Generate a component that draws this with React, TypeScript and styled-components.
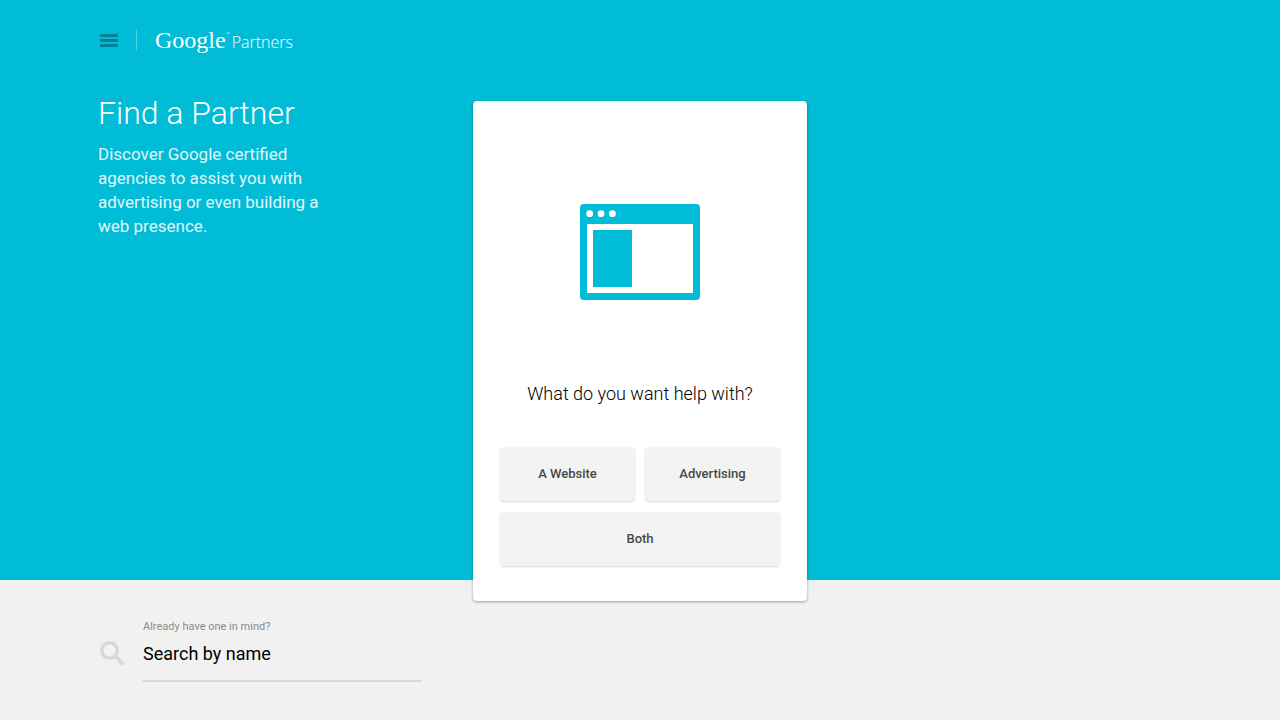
import React from "react";
import styled, { createGlobalStyle } from "styled-components";

const teal = "#00bcd7";

const GlobalStyle = createGlobalStyle`
  *, *::before, *::after { box-sizing: border-box; }
  body {
    margin: 0;
    background: #f1f1f1;
    font-family: Roboto, "Liberation Sans", sans-serif;
  }
  h1, h2, p { margin: 0; }
`;

const Hero = styled.div`
  background: ${teal};
  color: #fff;
`;

const TopBar = styled.header`
  display: flex;
  align-items: center;
  height: 80px;
  padding: 0 100px;
`;

const MenuButton = styled.button`
  display: flex;
  padding: 0;
  border: 0;
  background: none;
  color: #008294;
  cursor: pointer;
`;

const Divider = styled.span`
  width: 1px;
  height: 22px;
  margin: 0 18px;
  background: #4dd0e3;
`;

const Brand = styled.a`
  display: flex;
  align-items: baseline;
  color: #fff;
  text-decoration: none;
`;

const BrandName = styled.span`
  font: 24px/32px "Liberation Serif", serif;
`;

const TradeMark = styled.sup`
  align-self: flex-start;
  font: 4px/20px "Liberation Sans", sans-serif;
`;

const Product = styled.span`
  margin-left: 2px;
  font: 300 16px/24px "Open Sans", sans-serif;
`;

const Columns = styled.main`
  display: grid;
  grid-template-columns: minmax(0, 1fr) 334px minmax(0, 1fr);
  align-items: start;
  padding-top: 21px;
`;

const Intro = styled.section`
  padding: 0 100px 0 98px;
`;

const Title = styled.h1`
  margin-top: -10px;
  font-size: 32px;
  line-height: 44px;
  font-weight: 300;
  white-space: nowrap;
`;

const Lead = styled.p`
  max-width: 224px;
  margin-top: 7px;
  color: #e0f7fa;
  font-size: 17px;
  line-height: 24px;
`;

const Card = styled.section`
  position: relative;
  display: flex;
  flex-direction: column;
  align-items: center;
  margin-bottom: -21px;
  padding: 103px 27px 35px;
  border-radius: 4px;
  background: #fff;
  box-shadow: 0 1px 3px rgba(0, 0, 0, 0.35);
`;

const Question = styled.h2`
  margin-top: 80px;
  color: #000;
  font-size: 18px;
  line-height: 28px;
  font-weight: 300;
`;

const Choices = styled.div`
  display: grid;
  grid-template-columns: 1fr 1fr;
  gap: 11px 10px;
  width: 100%;
  margin-top: 39px;
`;

const Choice = styled.button<{ $wide?: boolean }>`
  grid-column: ${(p) => (p.$wide ? "1 / -1" : "auto")};
  height: 54px;
  padding: 0;
  border: 0;
  border-radius: 4px;
  background: #f3f3f3;
  box-shadow: 0 1px 2px rgba(0, 0, 0, 0.16);
  color: #484848;
  font: 500 13px/20px Roboto, sans-serif;
  cursor: pointer;
`;

const SearchArea = styled.form`
  display: flex;
  align-items: flex-start;
  padding: 39px 100px;
`;

const SearchIcon = styled.svg`
  flex: none;
  margin: 22px 18px 0 0;
`;

const Field = styled.div`
  display: flex;
  flex-direction: column;
  width: 278px;
`;

const FieldLabel = styled.label`
  color: #8c8c8c;
  font-size: 11px;
  line-height: 16px;
`;

const SearchInput = styled.input`
  width: 100%;
  height: 47px;
  padding: 0 0 8px;
  border: 0;
  border-bottom: 2px solid #d8d8d8;
  border-radius: 0;
  outline: 0;
  background: none;
  font: 18px/24px Roboto, sans-serif;
  color: #000;
  &::placeholder { color: #000; opacity: 1; }
`;

export default function App() {
  return (
    <>
      <GlobalStyle />
      <Hero>
        <TopBar>
          <MenuButton type="button" aria-label="Menu">
            <svg width="18" height="13" viewBox="0 0 18 13" fill="currentColor">
              <path d="M0 0h18v3H0zM0 5h18v3H0zM0 10h18v3H0z" />
            </svg>
          </MenuButton>
          <Divider />
          <Brand href="#">
            <BrandName>Google</BrandName>
            <TradeMark>™</TradeMark>
            <Product>Partners</Product>
          </Brand>
        </TopBar>
        <Columns>
          <Intro>
            <Title>Find a Partner</Title>
            <Lead>
              Discover Google certified agencies to assist you with advertising
              or even building a web presence.
            </Lead>
          </Intro>
          <Card>
            <svg width="120" height="96" viewBox="0 0 120 96" aria-hidden="true">
              <rect width="120" height="96" rx="4" fill={teal} />
              <path d="M7 20h106v69H7z" fill="#fff" />
              <path d="M13 26h39v57H13z" fill={teal} />
              <g fill="#fff">
                <circle cx="9.7" cy="9.7" r="3.4" />
                <circle cx="21" cy="9.7" r="3.4" />
                <circle cx="32.4" cy="9.7" r="3.4" />
              </g>
            </svg>
            <Question>What do you want help with?</Question>
            <Choices>
              <Choice type="button">A Website</Choice>
              <Choice type="button">Advertising</Choice>
              <Choice type="button" $wide>Both</Choice>
            </Choices>
          </Card>
        </Columns>
      </Hero>
      <SearchArea onSubmit={(e) => e.preventDefault()}>
        <SearchIcon width="25" height="25" viewBox="0 0 25 25" fill="none" stroke="#d8d8d8" aria-hidden="true">
          <circle cx="9.5" cy="9.5" r="7.8" strokeWidth="3.4" />
          <path d="M15.5 15.5l6.8 6.8" strokeWidth="3.8" strokeLinecap="round" />
        </SearchIcon>
        <Field>
          <FieldLabel htmlFor="partner-name">Already have one in mind?</FieldLabel>
          <SearchInput id="partner-name" type="text" placeholder="Search by name" />
        </Field>
      </SearchArea>
    </>
  );
}
